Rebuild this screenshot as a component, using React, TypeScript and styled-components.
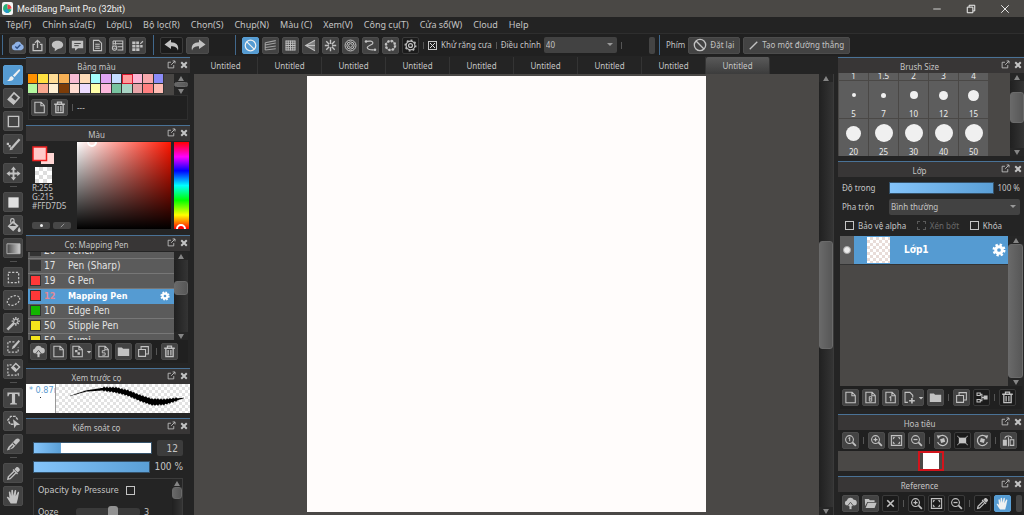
import React from "react";
import styled, { createGlobalStyle, css } from "styled-components";

const ui = `"Noto Sans", "Open Sans", sans-serif`;
const list = `"DejaVu Sans Condensed", "DejaVu Sans", sans-serif`;

const GlobalStyle = createGlobalStyle`
  * { box-sizing: border-box; }
  body { margin: 0; background: #242424; color: #c4c4c4; font: 8px/12px ${ui}; overflow: hidden; }
  button, input, select { font: inherit; color: inherit; margin: 0; padding: 0; border: 0; background: none; }
  svg { display: block; flex: none; }
  h2 { margin: 0; font: inherit; }
`;

const Shell = styled.div`
  display: flex;
  flex-direction: column;
  height: 100vh;
  overflow: hidden;
`;
const TitleBar = styled.header`
  display: flex;
  align-items: center;
  flex: none;
  height: 17px;
  padding: 0 12px 0 2px;
  background: #4a4845;
  color: #f2f2f2;
  font: 9px/12px Roboto, ${ui};
`;
const AppName = styled.span`
  margin-left: 4px;
  flex: 1;
`;
const WindowButtons = styled.div`
  display: flex;
  gap: 22px;
`;
const WindowButton = styled.button`
  width: 12px;
  height: 12px;
`;
const MenuBar = styled.nav`
  display: flex;
  flex: none;
  gap: 11px;
  height: 17px;
  padding: 0 6px;
  align-items: center;
  background: #232323;
  border-bottom: 1px solid #2e2e2e;
  font-size: 9px;
`;
const MenuItem = styled.button`
  white-space: nowrap;
`;
const ToolBar = styled.div`
  display: flex;
  flex: none;
  align-items: center;
  height: 22px;
  padding: 0 0 0 2px;
  background: #202020;
`;
const Handle = styled.i`
  flex: none;
  width: 1px;
  height: 20px;
  background: #41688c;
`;
const Group = styled.div<{ $w?: number }>`
  display: flex;
  align-items: center;
  gap: 3px;
  padding: 0 4px 0 6px;
  height: 22px;
  ${(p) => p.$w && css`width: ${p.$w}px;`}
`;
type Look = "plain" | "dark" | "on";
const IconButton = styled.button<{ $look?: Look; $w?: number }>`
  display: flex;
  flex: none;
  align-items: center;
  justify-content: center;
  gap: 2px;
  width: ${(p) => p.$w ?? 17}px;
  height: 17px;
  border-radius: 2px;
  border: 1px solid ${(p) => (p.$look === "on" ? "#5a9fd4" : p.$look === "dark" ? "#3a3a3a" : "#4c4c4c")};
  background: ${(p) => (p.$look === "on" ? "#559bd2" : p.$look === "dark" ? "#1b1b1b" : "#434343")};
  color: ${(p) => (p.$look === "on" ? "#f0f0f0" : "#c2c2c2")};
`;
const TextButton = styled(IconButton)`
  width: auto;
  padding: 0 5px 0 4px;
  gap: 3px;
  white-space: nowrap;
`;
const Divider = styled.i`
  flex: none;
  width: 1px;
  height: 7px;
  margin: 0 1px;
  background: #555;
`;
const CheckLabel = styled.label<{ $off?: boolean; $reverse?: boolean }>`
  display: flex;
  flex-direction: ${(p) => (p.$reverse ? "row-reverse" : "row")};
  align-items: center;
  gap: ${(p) => (p.$reverse ? 7 : 4)}px;
  white-space: nowrap;
  color: ${(p) => (p.$off ? "#6a6a6a" : "inherit")};
`;
const Check = styled.input`
  appearance: none;
  flex: none;
  width: 9px;
  height: 9px;
  border: 1px solid #c4c4c4;
  &:disabled { border: 1px dashed #5a5a5a; }
  &:checked {
    background:
      linear-gradient(45deg, transparent 42%, #ddd 42% 58%, transparent 58%) center / 5px 5px no-repeat,
      linear-gradient(-45deg, transparent 42%, #ddd 42% 58%, transparent 58%) center / 5px 5px no-repeat;
  }
`;
const SelectBox = styled.span<{ $w?: number }>`
  position: relative;
  display: flex;
  align-items: center;
  ${(p) => (p.$w ? css`width: ${p.$w}px;` : css`flex: 1;`)}
  height: 16px;
  background: #424242;
  border-radius: 2px;
  &::after {
    content: "";
    position: absolute;
    right: 4px;
    top: 6px;
    border: 3px solid transparent;
    border-top-color: #999;
    pointer-events: none;
  }
`;
const Select = styled.select`
  appearance: none;
  width: 100%;
  padding-left: 2px;
`;
const Grip = styled.i<{ $end?: boolean }>`
  flex: none;
  width: 6px;
  height: 17px;
  border-radius: 2px;
  background: #444;
  ${(p) => p.$end && css`margin-left: auto;`}
`;

const Workspace = styled.div`
  display: flex;
  flex: 1;
  min-height: 0;
`;
const ToolStrip = styled.aside`
  display: flex;
  flex: none;
  flex-direction: column;
  align-items: center;
  gap: 3px;
  width: 26px;
  padding: 6px 0 0;
  margin-top: 2px;
  border-top: 1px solid #41688c;
`;
const ToolButton = styled(IconButton)`
  width: 20px;
  height: 20px;
`;
const ToolRule = styled.i`
  flex: none;
  width: 7px;
  height: 3px;
  border-top: 1px solid #505050;
`;
const Dock = styled.aside<{ $w: number }>`
  display: flex;
  flex: none;
  flex-direction: column;
  gap: 5px;
  width: ${(p) => p.$w}px;
  margin-top: 1px;
  overflow: hidden;
`;
const PanelBox = styled.section<{ $grow?: boolean }>`
  display: flex;
  flex-direction: column;
  flex: ${(p) => (p.$grow ? "1 1 0" : "none")};
  min-height: 0;
  border-top: 1px solid #4a7296;
`;
const PanelHead = styled.header`
  display: grid;
  grid-template-columns: 1fr 23px;
  align-items: center;
  flex: none;
  height: 15px;
  background: #383636;
  text-align: center;
`;
const HeadIcons = styled.span`
  display: flex;
  align-self: start;
  align-items: center;
  gap: 3px;
  height: 13px;
`;
const HeadTitle = styled.h2`
  padding-top: 2px;
`;
const HeadButton = styled.button`
  display: flex;
  align-items: center;
  justify-content: center;
  height: 10px;
  width: 9px;
`;
const Row = styled.div<{ $h?: number; $gap?: number; $pad?: string; $between?: boolean }>`
  display: flex;
  align-items: center;
  flex: none;
  ${(p) => p.$between && css`justify-content: space-between;`}
  ${(p) => p.$h && css`height: ${p.$h}px;`}
  gap: ${(p) => p.$gap ?? 0}px;
  padding: ${(p) => p.$pad ?? "0"};
`;
const ButtonRow = styled.div<{ $h?: number; $framed?: boolean }>`
  display: flex;
  align-items: center;
  flex: none;
  gap: 3px;
  height: ${(p) => p.$h ?? 21}px;
  margin: 0 2px;
  padding-left: 2px;
  background: #202020;
  ${(p) => p.$framed && css`border: 1px solid #2e2e2e;`}
  overflow: hidden;
`;

/* scroll bars */
const Bar = styled.div<{ $w: number }>`
  display: flex;
  flex: none;
  flex-direction: column;
  align-items: center;
  width: ${(p) => p.$w}px;
  background: #262626;
`;
const Track = styled.div`
  flex: 1;
  width: 100%;
  min-height: 0;
  display: flex;
  flex-direction: column;
  background: linear-gradient(90deg, #202020, #343434);
`;
const Space = styled.i<{ $n: number }>`
  flex: ${(p) => p.$n} 1 0;
`;
const Thumb = styled.i<{ $n: number }>`
  flex: ${(p) => p.$n} 1 0;
  border-radius: 3px;
  background: linear-gradient(90deg, #696969, #575757);
  border: 1px solid #6a6a6a;
`;
const Arrow = styled.button<{ $down?: boolean }>`
  flex: none;
  width: 8px;
  height: 8px;
  display: flex;
  align-items: center;
  justify-content: center;
  &::before {
    content: "";
    border: 3px solid transparent;
    ${(p) =>
      p.$down
        ? css`border-top: 5px solid #858585; border-bottom: 0;`
        : css`border-bottom: 5px solid #858585; border-top: 0;`}
  }
`;
function Scroll({ w = 14, parts }: { w?: number; parts: [number, number, number] }) {
  return (
    <Bar $w={w}>
      <Arrow aria-label="Up" />
      <Track>
        <Space $n={parts[0]} />
        <Thumb $n={parts[1]} />
        <Space $n={parts[2]} />
      </Track>
      <Arrow $down aria-label="Down" />
    </Bar>
  );
}

/* palette */
const PaletteArea = styled.div`
  display: flex;
  margin: 1px 2px 0;
  height: 21px;
  background: #484644;
`;
const Palette = styled.div`
  display: grid;
  grid-template-columns: repeat(13, 1fr);
  grid-template-rows: 10px 10px;
  width: 136px;
  margin-right: auto;
`;
const Swatch = styled.button<{ $c: string; $on?: boolean }>`
  background: ${(p) => p.$c};
  border: 1px solid #333;
  border-width: 0 1px 1px 0;
  ${(p) => p.$on && css`border: 1px solid #d81830;`}
`;

/* colour picker */
const PickerBody = styled.div`
  display: flex;
  gap: 3px;
  height: 89px;
  padding: 1px 1px 1px 6px;
`;
const PickerInfo = styled.div`
  display: flex;
  flex-direction: column;
  width: 42px;
  padding-top: 4px;
  font: 8px/9px ${ui};
`;
const PillRow = styled.div`
  display: flex;
  gap: 3px;
  margin-top: auto;
`;
const Pill = styled.button`
  display: flex;
  align-items: center;
  justify-content: center;
  width: 18px;
  height: 7px;
  border-radius: 2px;
  background: #474747;
`;
const Field = styled.div`
  position: relative;
  flex: 1;
  overflow: hidden;
  background: linear-gradient(0deg, #000, transparent), linear-gradient(90deg, #fff, #ff1500);
`;
const Hue = styled.div`
  position: relative;
  width: 15px;
  overflow: hidden;
  background: linear-gradient(180deg, #f00, #f0f 17%, #00f 33%, #0ff 50%, #0f0 67%, #ff0 84%, #f00);
`;
const Ring = styled.i<{ $x: number; $y: string; $fill: string }>`
  position: absolute;
  left: ${(p) => p.$x}px;
  top: ${(p) => p.$y};
  width: 10px;
  height: 10px;
  border: 2px solid #fff;
  border-radius: 50%;
  background: ${(p) => p.$fill};
`;

/* brush list */
const BrushArea = styled.div`
  display: flex;
  height: 88px;
  margin: 1px 2px 0;
`;
const BrushList = styled.div`
  display: flex;
  flex: 1;
  flex-direction: column;
  justify-content: center;
  overflow: hidden;
  background: #5b5b5b;
  font: 10px/12px ${list};
`;
const BrushRow = styled.button<{ $on?: boolean }>`
  display: grid;
  grid-template-columns: 16px 24px 1fr 14px;
  align-items: center;
  flex: none;
  height: 15px;
  border-bottom: 1px solid #777;
  text-align: left;
  color: #e2e2e2;
  ${(p) => p.$on && css`background: #559bd2; color: #fff; font-size: 9px; font-weight: bold; border-color: #559bd2;`}
`;
const Chip = styled.i<{ $c: string }>`
  width: 11px;
  height: 11px;
  margin-left: 2px;
  background: ${(p) => p.$c};
  border: 1px solid #333;
`;
const BrushSize = styled.span<{ $on?: boolean }>`
  color: ${(p) => (p.$on ? "#e08a96" : "inherit")};
`;

/* brush preview */
const PreviewBody = styled.div`
  display: flex;
  height: 29px;
`;
const PreviewSize = styled.div`
  width: 30px;
  overflow: hidden;
  padding-left: 3px;
  background: #fff;
  border-right: 1px solid #999;
  color: #5b9bd0;
  white-space: nowrap;
  font: 9px/13px ${list};
`;
const PreviewStroke = styled.div`
  flex: 1;
  background: conic-gradient(#e2e2e2 25%, #fff 0 50%, #e2e2e2 0 75%, #fff 0) 0 0 / 6px 6px;
`;
const PreviewDot = styled.i`
  display: block;
  width: 1px;
  height: 1px;
  margin-left: 11px;
  background: #333;
`;

/* sliders */
const Slider = styled.input<{ $fill: number }>`
  appearance: none;
  display: block;
  flex: 1;
  min-width: 0;
  height: 12px;
  border: 1px solid #35526a;
  background: ${(p) =>
    `linear-gradient(90deg, #84c4fa, #5a9fd6) 0 0 / ${p.$fill}% 100% no-repeat #fff`};
  &::-webkit-slider-thumb { appearance: none; width: 0; height: 12px; }
`;
const KnobSlider = styled.input`
  appearance: none;
  width: 64px;
  height: 8px;
  border-radius: 3px;
  background: #3a3a3a;
  &::-webkit-slider-thumb {
    appearance: none;
    width: 10px;
    height: 12px;
    border-radius: 3px;
    background: #929292;
  }
`;
const Controls = styled.div`
  display: flex;
  flex: 1;
  flex-direction: column;
  min-height: 0;
  gap: 5px;
  padding: 6px 7px 0;
  font: 10px/12px ${list};
`;
const NumberBox = styled.input`
  width: 26px;
  height: 16px;
  padding-right: 5px;
  text-align: right;
  border-radius: 2px;
  background: #3c3c3c;
`;
const Options = styled.div`
  display: flex;
  flex: 1 0 72px;
  border: 1px solid #3c3c3c;
  font-size: 9px;
`;
const OptionRows = styled.div`
  display: flex;
  flex: 1;
  flex-direction: column;
  gap: 10px;
  padding: 5px 4px 0;
  align-items: flex-start;
`;
const Setting = styled.label`
  display: grid;
  grid-template-columns: 34px 64px 1fr;
  gap: 4px;
  align-items: center;
`;

/* canvas */
const Center = styled.main`
  display: flex;
  flex: 1;
  flex-direction: column;
  min-width: 0;
  margin: 1px 4px 0 4px;
`;
const Tabs = styled.div`
  display: flex;
  flex: none;
  height: 17px;
`;
const Tab = styled.button<{ $on?: boolean }>`
  flex: 0 1 64px;
  border-right: 1px solid #343434;
  ${(p) => p.$on && css`background: linear-gradient(#5a5a5a, #3c3c3c); border-radius: 2px 2px 0 0;`}
`;
const CanvasArea = styled.div`
  display: flex;
  flex: 1;
  min-height: 0;
  border-right: 1px solid #3a3a3a;
`;
const Desk = styled.div`
  display: flex;
  flex: 1;
  justify-content: center;
  padding: 2px 0 3px;
  background: #4a4846;
`;
const Sheet = styled.div`
  height: 100%;
  aspect-ratio: 399 / 436;
  background: #fffcfb;
`;

/* brush sizes */
const SizeArea = styled.div`
  display: flex;
  height: 83px;
  background: #4a4846;
`;
const SizeGrid = styled.div`
  display: grid;
  grid-template-columns: repeat(5, 29px);
  grid-auto-rows: 37px;
  gap: 1px;
  align-content: end;
  margin-right: auto;
  padding-left: 1px;
  overflow: hidden;
`;
const SizeCell = styled.button`
  display: flex;
  flex-direction: column;
  align-items: center;
  justify-content: space-between;
  background: #5d5d5d;
  color: #eee;
  font: 8px/9px ${ui};
`;
const DotBox = styled.span`
  display: flex;
  flex: 1;
  align-items: center;
`;
const Dot = styled.i<{ $d: number }>`
  width: ${(p) => p.$d}px;
  height: ${(p) => p.$d}px;
  border-radius: 50%;
  background: #f0f0f0;
`;

/* layers */
const LayerArea = styled.div`
  display: flex;
  flex: 1;
  min-height: 0;
  margin: 0 1px 0 2px;
`;
const LayerList = styled.div`
  flex: 1;
  background: #4a4846;
`;
const LayerRow = styled.div`
  display: grid;
  grid-template-columns: 14px 13px 23px 1fr 14px;
  align-items: center;
  height: 29px;
  padding-right: 2px;
  border-bottom: 1px solid #333;
  background: linear-gradient(90deg, #5d5d5d 14px, #559bd2 14px);
  color: #fff;
`;
const LayerThumb = styled.span`
  grid-column: 3;
  height: 26px;
  background: conic-gradient(#e8dcd8 25%, #fff 0 50%, #e8dcd8 0 75%, #fff 0) 0 0 / 6px 6px;
`;
const LayerName = styled.span`
  padding-left: 14px;
  font: bold 10px/12px ${list};
`;
const Eye = styled.button`
  width: 8px;
  height: 8px;
  margin-left: 3px;
  border-radius: 50%;
  background: #ececec;
  border: 1px solid #aaa;
`;
const Caption = styled.label`
  width: 47px;
`;
const Navigator = styled.div`
  display: flex;
  justify-content: center;
  height: 20px;
  background: #4a4846;
`;
const NavFrame = styled.div`
  width: 26px;
  padding: 0 3px;
  border: 2px solid #d3141c;
`;
const NavPage = styled.div`
  height: 100%;
  background: #fff;
`;

/* icons */
const s = { fill: "none", stroke: "currentColor", strokeWidth: 1.3 } as const;
const f = { fill: "currentColor" } as const;
const page = <path {...s} d="M2.3 1.6h7.700l3.900 3.900v9H2.300zM9.700 1.900v3.900h4" />;
const glass = (
  <>
    <circle {...s} cx="6.8" cy="6.8" r="4.8" />
    <path {...s} strokeWidth={2.2} d="M10.4 10.4l4.2 4.2" />
  </>
);
const icons: Record<string, React.ReactNode> = {
  cloud: (
    <>
      <path fill="#8fb2e6" d="M4.500 13.800a3.700 3.700 0 0 1-.6-7.300A4.800 4.800 0 0 1 12.800 6a4 4 0 0 1-.4 7.800z" />
      <path fill="none" stroke="#2c4f86" strokeWidth="1.7" d="M5.3 9.2l2.2 2.2 4-4.4" />
    </>
  ),
  share: <path {...s} strokeWidth={1.6} d="M5 6.5H2.6v7.8h10.8V6.5H11M8 11V2M4.8 4.8L8 1.6l3.2 3.2" />,
  bubble: <path {...f} d="M8 2.2c4 0 7 2 7 5s-3 5-6.4 5L4.5 15l.3-3.4C2.4 10.8 1 9.2 1 7.2c0-3 3-5 7-5z" />,
  comment: (
    <>
      <path {...f} d="M1 2h14v9.500H8.600L5 14.600v-3.100H1z" />
      <path stroke="#444" strokeWidth="1.2" d="M4 5.5h8M4 8.2h5.5" />
    </>
  ),
  doc: <path {...s} d="M3 1.7h6.5L13 5.200v9.100H3zM5.200 6.500h5.600M5.200 9h5.600M5.200 11.500h5.600" />,
  table: (
    <path {...s} d="M2.500 2.500H14.500v11H8M2.500 2.500V7M8 5.800h6.500M8 9.500h6.500M5.500 2.500V7M1.500 8.500h5.600M4.300 8.500a2.700 2.700 0 1 0 .1 0M3 11.300h2.700M2.500 5.800H8" />
  ),
  blocks: (
    <path {...f} d="M1.500 3h4v3.400h-4zM6.400 3h3.400v3.400H6.400zM1.500 7.300h4v3.300h-4zM6.400 7.300h4v3.300h-4zM1.500 11.500h4v3.200h-4zM6.400 11.500h4v3.200h-4zM10.900 5.600l3.300-3.300 1 1-3.300 3.300zM11.300 7.300h3v3.300h-3z" />
  ),
  undo: <path {...f} d="M7 2.500L.5 7.500 7 12V9.200c4 0 6 1 7 4.300 1.200-5.500-2-8.300-7-8.300z" />,
  redo: <path {...f} d="M9 2.500l6.500 5L9 12V9.200c-4 0-6 1-7 4.300C.8 8 4 5.200 9 5.200z" />,
  none: (
    <>
      <circle {...s} strokeWidth={1.5} cx="8" cy="8" r="6.500" />
      <path {...s} strokeWidth={1.5} d="M3.500 3.500l9 9" />
    </>
  ),
  parallel: <path {...s} strokeOpacity="0.750" d="M1.500 4.500l13-2.500M1.500 7.500l13-2.500M1.500 10.500l13-2M1.500 13.500l13-1.500M1.500 4.500v9" />,
  grid: <path {...s} strokeWidth={1.2} d="M2 2.500h12M2 5.200h12M2 8h12M2 10.800h12M2 13.500h12M2.500 2v12M5.200 2v12M8 2v12M10.800 2v12M13.500 2v12" />,
  vanish: (
    <>
      <path {...f} fillOpacity="0.500" d="M13.500 1.500L2 8l11.500 6.500z" />
      <path {...s} d="M13.500 1.500L2 8l11.500 6.500M2 8h11.500" />
    </>
  ),
  radial: <path {...s} strokeWidth={1.7} d="M8 1v5M8 10v5M1 8h5M10 8h5M2.800 2.800l3.600 3.600M9.600 9.600l3.600 3.600M13.200 2.800L9.600 6.400M6.400 9.600l-3.600 3.600" />,
  rings: (
    <>
      <circle {...s} strokeWidth={1.2} cx="8" cy="8" r="6.700" />
      <circle {...s} strokeWidth={1.2} cx="8" cy="8" r="4.500" />
      <circle {...s} strokeWidth={1.2} cx="8" cy="8" r="2.300" />
    </>
  ),
  curve: (
    <>
      <path {...s} strokeWidth={1.5} d="M3 3c4-1 8-.5 8 2S4 8 4 10.500s4 3 8 2.800" />
      <circle {...f} cx="2.500" cy="3" r="1.600" />
      <circle {...f} cx="13.500" cy="13.300" r="1.600" />
    </>
  ),
  dots: (
    <>
      <circle {...s} cx="8" cy="8" r="5.600" />
      <circle {...s} strokeWidth={3} strokeDasharray="2.200 2.200" cx="8" cy="8" r="5.600" />
    </>
  ),
  cog: (
    <>
      <circle {...s} strokeWidth={1.4} cx="8" cy="8" r="5.400" />
      <circle {...s} strokeWidth={1.6} strokeDasharray="2.300 2.770" cx="8" cy="8" r="6.600" />
      <circle {...s} strokeWidth={1.5} cx="8" cy="8" r="2.400" />
    </>
  ),
  gear: (
    <>
      <circle {...s} strokeWidth={3.4} cx="8" cy="8" r="3.800" />
      <circle {...s} strokeWidth={2.8} strokeDasharray="2.600 2.110" cx="8" cy="8" r="6" />
    </>
  ),
  line: <path {...s} strokeWidth={2} d="M2.500 13.500l11-11" />,
  brush: <path {...f} d="M14.800 1.500c.6.7.2 1.300-.3 1.900L9.200 9.700 7.300 8l6-6.200c.5-.5 1-.8 1.500-.3zM6.400 8.800L8.300 10.600C8 13 5.500 14.600 1 13.600c2-.7 2.200-1.500 2.700-2.900.4-1.200 1.400-1.900 2.700-1.900z" />,
  eraser: (
    <>
      <path {...s} strokeWidth={1.8} d="M8.500 2L14 7l-6 6.800L2.500 9z" />
      <path {...f} d="M5 6l6 5.200L8 14 2.200 9z" />
    </>
  ),
  rect: <path {...s} strokeWidth={1.5} d="M2.500 2.500h11v11h-11z" />,
  dotpen: (
    <>
      <path {...s} strokeWidth={2.4} d="M6 12L14.500 2.500" />
      <path {...f} d="M4.600 10.600l2.800 2.600-3.600.8zM.8 6h2.400v2.400H.8zM2.800 8.600h2.200v2.200H2.800z" />
    </>
  ),
  move: <path {...f} d="M8 .5L10.800 4H9v3h3V5.200L15.500 8 12 10.800V9H9v3h1.800L8 15.500 5.200 12H7V9H4v1.800L.5 8 4 5.200V7h3V4H5.200z" />,
  square: <path fill="#e0e0e0" d="M2.500 2.500h11v11h-11z" />,
  bucket: (
    <>
      <path {...s} d="M5 5V2.500a1.800 1.800 0 0 1 3.600 0V7" />
      <path {...f} d="M7.500 3l6 5.200-5.800 6-6-5.400zM3.800 8.600h6.900L7.800 5.300z" fillRule="evenodd" />
      <path {...f} d="M14 9.500c1.300 2 1.700 3 1.700 3.800a1.600 1.600 0 0 1-3.200 0c0-.8.5-2 1.500-3.800z" />
    </>
  ),
  gradient: (
    <>
      <defs>
        <linearGradient id="toolGradient">
          <stop offset="0" stopColor="#444" />
          <stop offset="1" stopColor="#d0d0d0" />
        </linearGradient>
      </defs>
      <path fill="url(#toolGradient)" stroke="#b8b8b8" d="M1 3h14v10.500H1z" />
    </>
  ),
  marquee: <path {...s} strokeDasharray="2.400 1.600" d="M2.500 2.500h11v11h-11z" />,
  lasso: <ellipse {...s} strokeDasharray="2.200 1.500" cx="8" cy="8" rx="7" ry="4.600" transform="rotate(-25 8 8)" />,
  wand: (
    <>
      <path {...s} strokeWidth={2.8} d="M1.500 14.500l7.500-7.500" />
      <path {...s} strokeWidth={1.5} d="M10.500 1v3M10.500 7.500v3M6 5.500h3M12 5.500h3M7.500 2.500l2 2M13.500 2.500l-2 2M13.500 8.500l-2-2" />
    </>
  ),
  selpen: (
    <>
      <path {...s} strokeDasharray="2.200 1.500" d="M9 3H2v11h11V9" />
      <path {...f} d="M13.500 1l1.500 1.500-6 7-3 1.300 1.300-3z" />
    </>
  ),
  seleraser: (
    <>
      <path {...s} strokeDasharray="2.200 1.500" d="M6 3H2v11h11v-3" />
      <path {...s} strokeWidth={1.5} d="M10.500 1.500l4 3.800-4.300 4.500-4-3.800z" />
      <path {...f} d="M8 4.200l4 3.800-2 2.200-4.200-4z" />
    </>
  ),
  text: <path {...f} d="M1.500 1.500h13v4h-1.300c-.3-1.700-.7-2.200-2.200-2.200H9.700v8.800c0 1 .4 1.200 2 1.300v1.100H4.300v-1.100c1.600-.1 2-.3 2-1.300V3.300H5c-1.500 0-1.900.5-2.200 2.200H1.500z" />,
  pick: (
    <>
      <path {...s} strokeDasharray="3 1" strokeWidth={1.5} d="M8 11H4.500L2 6.500 5 2.500h5l2.500 3.500" />
      <path {...f} d="M7.500 5.500l7.500 6-4 .6-2.200 3.200z" />
    </>
  ),
  knife: (
    <>
      <path {...f} d="M10.300 2.400C12 .8 15.500 1.500 14.600 4.200L7.500 12 1 14.500C1.500 11.800 2.800 10 4 9z" />
      <path stroke="#444" strokeWidth="1.1" d="M4 12.500l3.500-3.600M7.200 6l3 3" />
    </>
  ),
  dropper: (
    <>
      <path {...f} d="M11 1.300c1.500-1 4.600 2 3.600 3.600L12.500 7 9 3.500zM8 3.200L12.800 8l-1 1L7 4.200z" />
      <path {...s} strokeWidth={1.5} d="M8.500 5.500l-6 6-.5 2.500 2.500-.5 6-6" />
    </>
  ),
  hand: <path {...f} d="M5 15.500C3.500 13 2 11 .8 8.800c.7-.9 1.600-.6 2.900 1L3 3.500c.1-1.100 1.500-1.200 1.700 0L5.600 7.500 5.700 1.700c.1-1.200 1.700-1.200 1.800 0l.4 5.500L9.200 1.700c.3-1.100 1.800-.9 1.700.3L10.300 7.600l2-4c.5-1 1.900-.5 1.600.6-.8 3-1 6-1.900 8.500l-.7 2.800z" />,
  page,
  page8: (
    <>
      {page}
      <path {...s} strokeWidth={1.2} d="M6.500 7h3v5.500h-3zM6.500 9.700h3" />
    </>
  ),
  page1: (
    <>
      {page}
      <path {...s} strokeWidth={1.4} d="M6.600 8l1.700-1v5.500" />
    </>
  ),
  pageS: (
    <>
      {page}
      <path {...s} strokeWidth={1.2} d="M10 7H6.500v2.700H10v2.800H6.500" />
    </>
  ),
  pageDots: (
    <>
      {page}
      <path {...f} d="M5 6h3v3H5zM8 9h3v3H8z" />
    </>
  ),
  pagePlus: (
    <>
      <path {...s} d="M6 14H2.500V1.700h6L12 5.300V8" />
      <path {...s} strokeWidth={2} d="M11 8.500v7M7.500 12h7" />
    </>
  ),
  trash: (
    <>
      <path {...s} strokeWidth={1.6} d="M1.500 4h13M5.500 3.500v-2h5v2M3.500 5v9.300h9V5" />
      <path {...s} strokeWidth={1.5} d="M6.300 6v7M9.700 6v7" />
    </>
  ),
  upload: (
    <>
      <path {...f} d="M4 10.500a3.200 3.200 0 0 1-.5-6.300A4.500 4.500 0 0 1 12 3.500a3.500 3.500 0 0 1 .5 7z" />
      <path {...f} stroke="#434343" strokeWidth="1" d="M8 6.500l4 5H9.800V15.500H6.200V11.500H4z" />
    </>
  ),
  folder: <path {...f} d="M1 3h5l1.500 1.700H15V13.500H1z" />,
  open: <path {...f} d="M1 2.500h5L7.300 4H13v2H4L1.500 11.500zM4.700 7H15.500L13 13.500H2z" />,
  copy: <path {...s} d="M2 5.500h8.500V14H2zM5 5V2h9v9h-3" />,
  tree: (
    <>
      <path {...s} d="M2.500 2.500h4v3h-4zM2.500 10.500h4v3h-4zM7 4h1.500v8H7M8.500 8h3" />
      <path {...f} d="M10.500 5.500h5v5h-5z" />
    </>
  ),
  zoom1: (
    <>
      {glass}
      <path {...s} d="M5.500 5.500L7 4.500V9" />
    </>
  ),
  zoomIn: (
    <>
      {glass}
      <path {...s} strokeWidth={1.6} d="M6.800 4.300v5M4.300 6.800h5" />
    </>
  ),
  zoomOut: (
    <>
      {glass}
      <path {...s} strokeWidth={1.6} d="M4.300 6.800h5" />
    </>
  ),
  fit: (
    <>
      <path {...s} d="M1.700 2h12.600v12H1.700z" />
      <path {...f} d="M3.500 4h3L3.500 7zM12.500 4v3l-3-3zM3.500 12V9l3 3zM12.500 12h-3l3-3z" />
    </>
  ),
  rotL: (
    <>
      <path {...s} strokeWidth={1.6} d="M3.500 3.500a6.300 6.300 0 1 1-1.500 6.500" />
      <path {...f} d="M1 1.500l5 .5-3.500 4zM5 6.500l5-1.500 1.300 4.500-5 1.500z" />
    </>
  ),
  rotR: (
    <>
      <path {...s} strokeWidth={1.6} d="M12.500 3.500A6.300 6.300 0 1 0 14 10" />
      <path {...f} d="M15 1.500l-5 .5 3.500 4zM6 5l5 1.500L9.700 11l-5-1.500z" />
    </>
  ),
  reset: (
    <>
      <path {...s} strokeWidth={1.1} d="M1.500 2.500l3 2.500M14.500 2.500l-3 2.500M1.500 13.500l3-2.500M14.500 13.500l-3-2.500" />
      <path {...f} d="M3.500 4.500h9v7h-9z" />
    </>
  ),
  flip: (
    <>
      <path {...f} d="M1 7h5v7.500H1z" />
      <path {...s} d="M10 7h4.500v7H10zM3.500 5.500C4 2 11 1 12 5.500M8 4v11" />
    </>
  ),
  cross: <path {...s} strokeWidth={2} d="M4 4l8 8M12 4l-8 8" />,
  close: <path {...s} strokeWidth={4} d="M2.500 2.500l11 11M13.500 2.500l-11 11" />,
  float: (
    <>
      <path {...s} strokeWidth={1.5} d="M7 4H2v10h10V9" />
      <path {...s} strokeWidth={1.5} d="M7.500 8.500L14 2M10 1.700h4.300V6" />
    </>
  ),
  min: <path {...s} d="M2 8h12" />,
  max: <path {...s} strokeWidth={1.6} d="M2 5h9v9H2zM5 4.500V2h9v9h-2.500" />,
  quit: <path {...s} strokeWidth={1.5} d="M2 2l12 12M14 2L2 14" />,
  caret: <path {...f} d="M2 5h12L8 12z" />,
};
const Icon = ({ n, size = 13 }: { n: string; size?: number }) => (
  <svg width={size} height={size} viewBox="0 0 16 16" aria-hidden="true">
    {icons[n]}
  </svg>
);

/* "name", "name*" = dark, "name!" = selected, "name+" = with caret, "|" = divider */
function Buttons({ items }: { items: string[] }) {
  return (
    <>
      {items.map((it, i) => {
        if (it === "|") return <Divider key={i} />;
        const name = it.replace(/[*!+]/, "");
        const look: Look = it.endsWith("*") ? "dark" : it.endsWith("!") ? "on" : "plain";
        return (
          <IconButton key={i} $look={look} $w={it.endsWith("+") ? 22 : undefined} aria-label={name}>
            <Icon n={name} />
            {it.endsWith("+") && <Icon n="caret" size={6} />}
          </IconButton>
        );
      })}
    </>
  );
}

function Panel({ title, grow, children }: { title: string; grow?: boolean; children: React.ReactNode }) {
  return (
    <PanelBox $grow={grow}>
      <PanelHead>
        <HeadTitle>{title}</HeadTitle>
        <HeadIcons>
          <HeadButton aria-label="Float"><Icon n="float" size={9} /></HeadButton>
          <HeadButton aria-label="Close"><Icon n="close" size={8} /></HeadButton>
        </HeadIcons>
      </PanelHead>
      {children}
    </PanelBox>
  );
}

const menus = ["Tệp(F)", "Chỉnh sửa(E)", "Lớp(L)", "Bộ lọc(R)", "Chọn(S)", "Chụp(N)", "Màu (C)", "Xem(V)", "Công cụ(T)", "Cửa sổ(W)", "Cloud", "Help"];
const tools = ["brush!", "eraser", "rect", "dotpen", "|", "move", "|", "square", "bucket", "gradient", "|", "marquee", "lasso", "wand", "selpen", "seleraser", "|", "text", "pick", "knife", "|", "dropper", "hand"];
const palette = [
  "#ff9100", "#ffe040", "#ffdc94", "#f7b055", "#f8bcd4", "#ffdcb8", "#a4fcfc", "#e0a4f4", "#c4dcff", "#ff9c9c", "#fcb4d4", "#f8a8ac", "#8c8cf8",
  "#b4f8a0", "#f8a890", "#fff0d4", "#7c3c08", "#ffdcd0", "#ecdcff", "#ffffa8", "#fcb8dc", "#78c4a0", "#a8d4c4", "#e8a4a8", "#ff8080", "#ffbcb4",
];
const brushes: [string, string, string][] = [
  ["#333", "20", "Pencil"],
  ["#333", "17", "Pen (Sharp)"],
  ["#ff3838", "19", "G Pen"],
  ["#ff3838", "12", "Mapping Pen"],
  ["#12b400", "10", "Edge Pen"],
  ["#f4e41c", "50", "Stipple Pen"],
  ["#f4e41c", "50", "Sumi"],
];
const sizes: [number, string][] = [
  [2, "1"], [2, "1.5"], [2, "2"], [3, "3"], [3, "4"],
  [4, "5"], [5, "7"], [8, "10"], [9, "12"], [11, "15"],
  [15, "20"], [18, "25"], [18, "30"], [18, "40"], [18, "50"],
];

/* Brush sample: x, y and half width of a tapering stroke; edges are made ragged. */
const strokeKeys = [
  [14, 12, 0.2], [30, 7, 0.6], [48, 5, 1.4], [60, 6, 2.2], [72, 9, 2.4],
  [84, 14, 2.6], [96, 18, 2.8], [108, 18, 2.4], [118, 16, 1.4], [128, 14, 0.3],
];
const strokePath = (() => {
  const top: string[] = [];
  const bottom: string[] = [];
  for (let x = 14; x <= 128; x += 1) {
    const k = Math.max(0, strokeKeys.findIndex((p) => p[0] >= x) - 1);
    const [x0, y0, w0] = strokeKeys[k];
    const [x1, y1, w1] = strokeKeys[k + 1];
    const t = (x - x0) / (x1 - x0);
    const y = y0 + (y1 - y0) * t;
    const w = w0 + (w1 - w0) * t;
    const rag = x > 46 && x < 122 && x % 3 === 0 ? 1.3 : 0;
    top.push(`${x} ${y - w - rag}`);
    bottom.unshift(`${x} ${y + w + rag}`);
  }
  return `M${top.join("L")}L${bottom.join("L")}Z`;
})();

export default function App() {
  return (
    <Shell>
      <GlobalStyle />
      <TitleBar>
        <svg width="11" height="13" viewBox="0 0 11 13" aria-hidden="true">
          <rect width="11" height="13" rx="2" fill="#f4f4f4" />
          <path fill="#28b478" d="M5.500 2a4.300 4.300 0 1 0 4 5.500L5.500 6.500z" />
          <path fill="#e84848" d="M5.500 2.500c2.500 0 4 2 4 4l-4 1z" />
          <path fill="#2898c8" d="M2 8.500l3.500-2 1.500 4.300c-2 .7-4 0-5-2.300z" />
        </svg>
        <AppName>MediBang Paint Pro (32bit)</AppName>
        <WindowButtons>
          <WindowButton aria-label="Minimize"><Icon n="min" size={10} /></WindowButton>
          <WindowButton aria-label="Restore"><Icon n="max" size={10} /></WindowButton>
          <WindowButton aria-label="Close"><Icon n="quit" size={10} /></WindowButton>
        </WindowButtons>
      </TitleBar>
      <MenuBar>{menus.map((m) => <MenuItem key={m}>{m}</MenuItem>)}</MenuBar>
      <ToolBar>
        <Handle />
        <Group $w={150}><Buttons items={["cloud", "share", "bubble", "comment", "doc", "table", "blocks"]} /></Group>
        <Handle />
        <Group $w={81}>
          <IconButton $look="dark" $w={23} aria-label="Undo"><Icon n="undo" size={16} /></IconButton>
          <IconButton $w={23} aria-label="Redo"><Icon n="redo" size={16} /></IconButton>
        </Group>
        <Handle />
        <Group $w={423}>
          <Buttons items={["none!", "parallel", "grid", "vanish", "radial", "rings", "curve", "dots", "cog*", "|"]} />
          <CheckLabel><Check type="checkbox" defaultChecked />Khử răng cưa</CheckLabel>
          <Divider />
          <label htmlFor="adjust">Điều chỉnh</label>
          <SelectBox $w={73}><Select id="adjust"><option>40</option></Select></SelectBox>
          <Divider />
          <Grip $end />
        </Group>
        <Handle />
        <Group>
          <span>Phím</span>
          <TextButton><Icon n="none" size={14} />Đặt lại</TextButton>
          <TextButton><Icon n="line" size={11} />Tạo một đường thẳng</TextButton>
        </Group>
      </ToolBar>
      <Workspace>
        <ToolStrip>
          {tools.map((t, i) =>
            t === "|" ? (
              <ToolRule key={i} />
            ) : (
              <ToolButton key={i} $look={t.endsWith("!") ? "on" : "plain"} aria-label={t.replace("!", "")}>
                <Icon n={t.replace("!", "")} size={15} />
              </ToolButton>
            )
          )}
        </ToolStrip>
        <Dock $w={164}>
          <Panel title="Bảng màu">
            <PaletteArea>
              <Palette>
                {palette.map((c, i) => <Swatch key={i} $c={c} $on={i === 9} aria-label={c} />)}
              </Palette>
              <Scroll parts={[0, 1, 0]} />
            </PaletteArea>
            <ButtonRow $h={25} $framed>
              <Buttons items={["page", "trash", "|"]} />
              <span>---</span>
            </ButtonRow>
          </Panel>
          <Panel title="Màu">
            <PickerBody>
              <PickerInfo>
                <svg width="24" height="37" viewBox="0 0 24 37" aria-hidden="true">
                  <path fill="#ffd7d5" d="M9 7h13v11H9z" />
                  <path fill="#ffc9c9" stroke="#f02020" strokeWidth="1.500" d="M1 1h13.500v13.500H1z" />
                  <path fill="#fff" d="M3 21h17v16H3z" />
                  <path fill="#ddd" d="M7 21h4v4H7zM15 21h5v4h-5zM3 25h4v4H3zM11 25h4v4h-4zM7 29h4v4H7zM15 29h5v4h-5zM11 33h4v4h-4zM3 33h4v4H3z" />
                </svg>
                <span>R:255</span>
                <span>G:215</span>
                <span>#FFD7D5</span>
                <PillRow>
                  <Pill aria-label="Palette"><Dot $d={3} /></Pill>
                  <Pill aria-label="Pick"><Icon n="line" size={5} /></Pill>
                </PillRow>
              </PickerInfo>
              <Field><Ring $x={10} $y="-5px" $fill="#ffe0dc" /></Field>
              <Hue><Ring $x={2} $y="82px" $fill="#f00" /></Hue>
            </PickerBody>
          </Panel>
          <Panel title="Cọ: Mapping Pen">
            <BrushArea>
              <BrushList>
                {brushes.map(([c, n, name], i) => (
                  <BrushRow key={i} $on={i === 3}>
                    <Chip $c={c} />
                    <BrushSize $on={i === 3}>{n}</BrushSize>
                    <span>{name}</span>
                    {i === 3 && <Icon n="gear" size={10} />}
                  </BrushRow>
                ))}
              </BrushList>
              <Scroll parts={[23, 12, 40]} />
            </BrushArea>
            <ButtonRow $h={23}><Buttons items={["upload", "page", "pageDots+", "pageS", "folder", "copy", "|", "trash"]} /></ButtonRow>
          </Panel>
          <Panel title="Xem trước cọ">
            <PreviewBody>
              <PreviewSize>* 0.87m<PreviewDot /></PreviewSize>
              <PreviewStroke>
                <svg width="134" height="29" viewBox="0 0 134 29" aria-hidden="true"><path d={strokePath} fill="#000" /></svg>
              </PreviewStroke>
            </PreviewBody>
          </Panel>
          <Panel title="Kiểm soát cọ" grow>
            <Controls>
              <Row $gap={5} $h={16}>
                <Slider type="range" $fill={23} aria-label="Size" />
                <NumberBox defaultValue="12" aria-label="Size value" />
              </Row>
              <Row $gap={4} $h={12}>
                <Slider type="range" $fill={100} aria-label="Opacity" />
                <span>100 %</span>
              </Row>
              <Options>
                <OptionRows>
                  <CheckLabel $reverse><Check type="checkbox" />Opacity by Pressure</CheckLabel>
                  <Setting>Ooze<KnobSlider type="range" defaultValue={60} /><span>3</span></Setting>
                </OptionRows>
                <Scroll w={10} parts={[0, 10, 44]} />
              </Options>
            </Controls>
          </Panel>
        </Dock>
        <Center>
          <Tabs>
            {Array.from({ length: 9 }, (_, i) => <Tab key={i} $on={i === 8}>Untitled</Tab>)}
          </Tabs>
          <CanvasArea>
            <Desk><Sheet /></Desk>
            <Scroll w={14} parts={[160, 106, 159]} />
          </CanvasArea>
        </Center>
        <Dock $w={186}>
          <Panel title="Brush Size">
            <SizeArea>
              <SizeGrid>
                {sizes.map(([d, n]) => (
                  <SizeCell key={n}><DotBox><Dot $d={d} /></DotBox>{n}</SizeCell>
                ))}
              </SizeGrid>
              <Scroll parts={[11, 30, 26]} />
            </SizeArea>
          </Panel>
          <Panel title="Lớp" grow>
            <Row $h={21} $pad="0 4px">
              <Caption htmlFor="opacity">Độ trong</Caption>
              <Slider id="opacity" type="range" $fill={100} />
              <Row $pad="0 0 0 4px">100 %</Row>
            </Row>
            <Row $h={17} $pad="0 4px">
              <Caption htmlFor="blend">Pha trộn</Caption>
              <SelectBox><Select id="blend"><option>Bình thường</option></Select></SelectBox>
            </Row>
            <Row $h={21} $pad="0 22px 0 7px" $between>
              <CheckLabel><Check type="checkbox" />Bảo vệ alpha</CheckLabel>
              <CheckLabel $off><Check type="checkbox" disabled />Xén bớt</CheckLabel>
              <CheckLabel><Check type="checkbox" />Khóa</CheckLabel>
            </Row>
            <LayerArea>
              <LayerList>
                <LayerRow>
                  <Eye aria-label="Visible" />
                  <LayerThumb />
                  <LayerName>Lớp1</LayerName>
                  <Icon n="gear" size={14} />
                </LayerRow>
              </LayerList>
              <Scroll w={15} parts={[0, 1, 0]} />
            </LayerArea>
            <ButtonRow $h={23}><Buttons items={["page", "page8", "page1", "pagePlus+", "folder", "|", "copy", "tree*", "|", "trash*"]} /></ButtonRow>
          </Panel>
          <Panel title="Hoa tiêu">
            <ButtonRow><Buttons items={["zoom1", "|", "zoomIn", "fit", "zoomOut", "|", "rotL", "reset*", "rotR", "|", "flip"]} /></ButtonRow>
            <Navigator><NavFrame><NavPage /></NavFrame></Navigator>
          </Panel>
          <Panel title="Reference">
            <ButtonRow $h={23}><Buttons items={["upload", "open", "cross*", "|", "zoomIn*", "fit*", "zoomOut*", "|", "dropper*", "hand!"]} /><Grip $end /></ButtonRow>
          </Panel>
        </Dock>
      </Workspace>
    </Shell>
  );
}
